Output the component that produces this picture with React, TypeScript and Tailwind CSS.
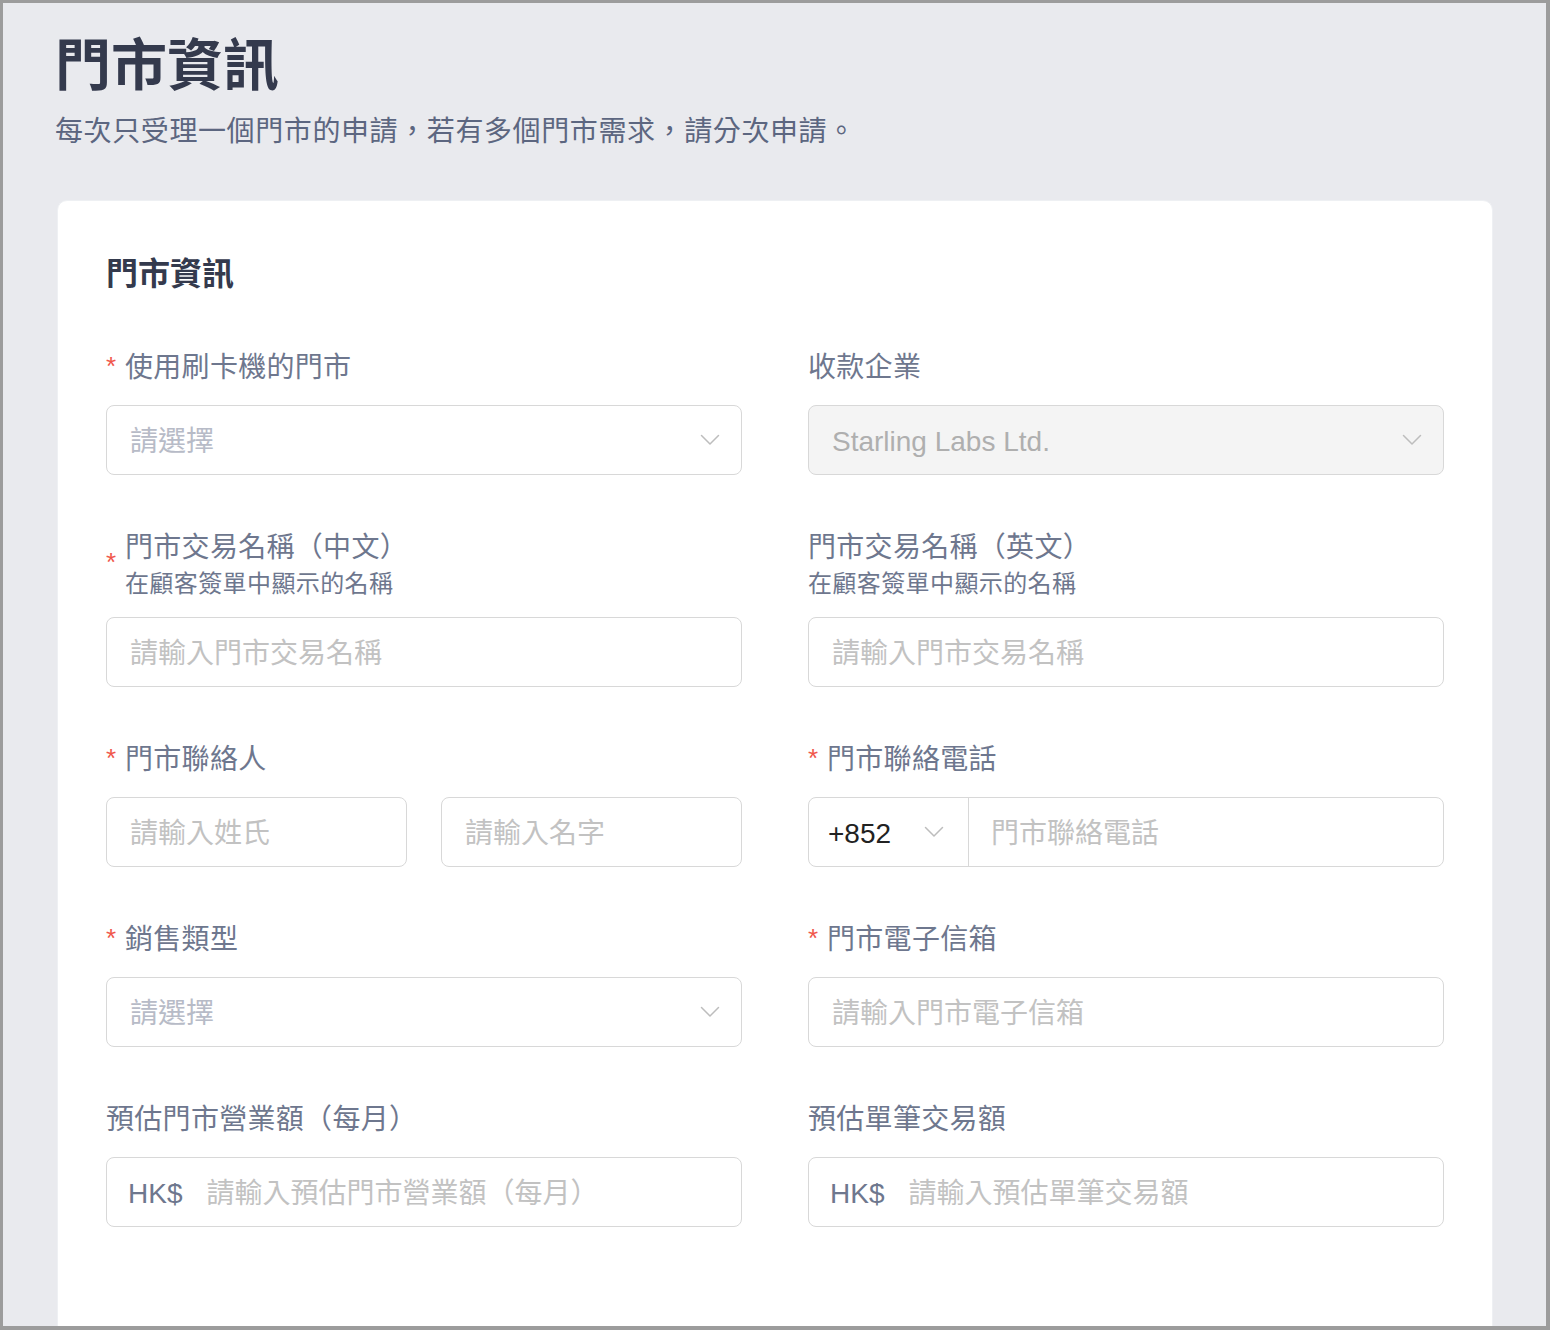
import React from "react";

const FONT = { fontFamily: '"Liberation Sans", "Noto Sans CJK TC", sans-serif' };

function Chevron({ className = "" }: { className?: string }) {
  return (
    <svg width="20" height="12" viewBox="0 0 20 12" className={className} fill="none">
      <polyline points="1.5,1.5 10,10 18.5,1.5" stroke="#bdbdbd" strokeWidth="1.5" strokeLinecap="round" strokeLinejoin="round" />
    </svg>
  );
}

function Star() {
  return <span className="text-[#f0574b] text-[26px] leading-none mr-[7px] w-[12px] inline-block">*</span>;
}

function Label({ text, required, sub }: { text: string; required?: boolean; sub?: string }) {
  return (
    <div className="flex items-center mb-[19px]">
      {required && <Star />}
      <div className="flex flex-col">
        <div className="text-[28px] leading-[40px] text-[#6e778e] pt-[2px] -mb-[2px] tracking-[0.3px]">{text}</div>
        {sub && <div className="text-[24px] leading-[32px] text-[#6e778e] pt-[2px] -mb-[2px] tracking-[0.4px]">{sub}</div>}
      </div>
    </div>
  );
}

const boxCls = "h-[70px] rounded-[8px] border-[1.5px] border-[#d8d8d8] bg-white flex items-center";

function SelectBox({ placeholder }: { placeholder: string }) {
  return (
    <div className={boxCls + " pl-[23px] pr-[21px] justify-between"}>
      <span className="text-[28px] text-[#b7bbc7] pt-[4px]">{placeholder}</span>
      <Chevron />
    </div>
  );
}

function InputBox({ placeholder }: { placeholder: string }) {
  return (
    <div className={boxCls + " px-[23px]"}>
      <span className="text-[28px] text-[#c2c2c2] pt-[4px]">{placeholder}</span>
    </div>
  );
}

function MoneyBox({ placeholder }: { placeholder: string }) {
  return (
    <div className={boxCls + " px-[21px]"}>
      <span className="text-[28px] text-[#6e778e] mr-[24px] pt-[4px]">HK$</span>
      <span className="text-[28px] text-[#c2c2c2] pt-[4px]">{placeholder}</span>
    </div>
  );
}

export default function App() {
  return (
    <div
      style={FONT}
      className="w-[1550px] h-[1330px] overflow-hidden bg-[#e9eaee] border-l-[3px] border-t-[3px] border-r-[4px] border-b-[4px] border-[#9c9c9c] box-border"
    >
      <div className="pl-[54px] pr-[53px] pt-[29px]">
        <h1 className="text-[56px] leading-[68px] font-bold text-[#343a4d] -ml-[2px]">門市資訊</h1>
        <p className="mt-[12px] -mb-[2px] -ml-[2px] text-[28px] leading-[40px] text-[#5c6680] tracking-[0.6px]">
          每次只受理一個門市的申請，若有多個門市需求，請分次申請。
        </p>
        <div className="mt-[50px] bg-white rounded-[10px] border border-[#eef0f3] px-[48px] pt-[47px] pb-[120px]">
          <h2 className="text-[32px] leading-[48px] font-bold text-[#343a4d] pt-[2px] -mb-[2px]">門市資訊</h2>
          <div className="mt-[50px] grid grid-cols-2 gap-x-[66px] gap-y-[51px]">
            <div>
              <Label text="使用刷卡機的門市" required />
              <SelectBox placeholder="請選擇" />
            </div>
            <div>
              <Label text="收款企業" />
              <div className="h-[70px] rounded-[8px] border-[1.5px] border-[#d8d8d8] bg-[#f4f4f4] flex items-center justify-between pl-[23px] pr-[21px]">
                <span className="text-[28px] text-[#afafaf] pt-[4px]">Starling Labs Ltd.</span>
                <Chevron />
              </div>
            </div>

            <div>
              <Label text="門市交易名稱（中文）" required sub="在顧客簽單中顯示的名稱" />
              <InputBox placeholder="請輸入門市交易名稱" />
            </div>
            <div>
              <Label text="門市交易名稱（英文）" sub="在顧客簽單中顯示的名稱" />
              <InputBox placeholder="請輸入門市交易名稱" />
            </div>

            <div>
              <Label text="門市聯絡人" required />
              <div className="grid grid-cols-2 gap-x-[34px]">
                <InputBox placeholder="請輸入姓氏" />
                <InputBox placeholder="請輸入名字" />
              </div>
            </div>
            <div>
              <Label text="門市聯絡電話" required />
              <div className={boxCls + " overflow-hidden"}>
                <div className="w-[160px] h-full flex items-center justify-between pl-[19px] pr-[24px] border-r-[1.5px] border-[#d8d8d8]">
                  <span className="text-[28px] text-[#222222] pt-[4px]">+852</span>
                  <Chevron />
                </div>
                <span className="pl-[22px] text-[28px] text-[#c2c2c2] pt-[4px]">門市聯絡電話</span>
              </div>
            </div>

            <div>
              <Label text="銷售類型" required />
              <SelectBox placeholder="請選擇" />
            </div>
            <div>
              <Label text="門市電子信箱" required />
              <InputBox placeholder="請輸入門市電子信箱" />
            </div>

            <div>
              <Label text="預估門市營業額（每月）" />
              <MoneyBox placeholder="請輸入預估門市營業額（每月）" />
            </div>
            <div>
              <Label text="預估單筆交易額" />
              <MoneyBox placeholder="請輸入預估單筆交易額" />
            </div>
          </div>
        </div>
      </div>
    </div>
  );
}
